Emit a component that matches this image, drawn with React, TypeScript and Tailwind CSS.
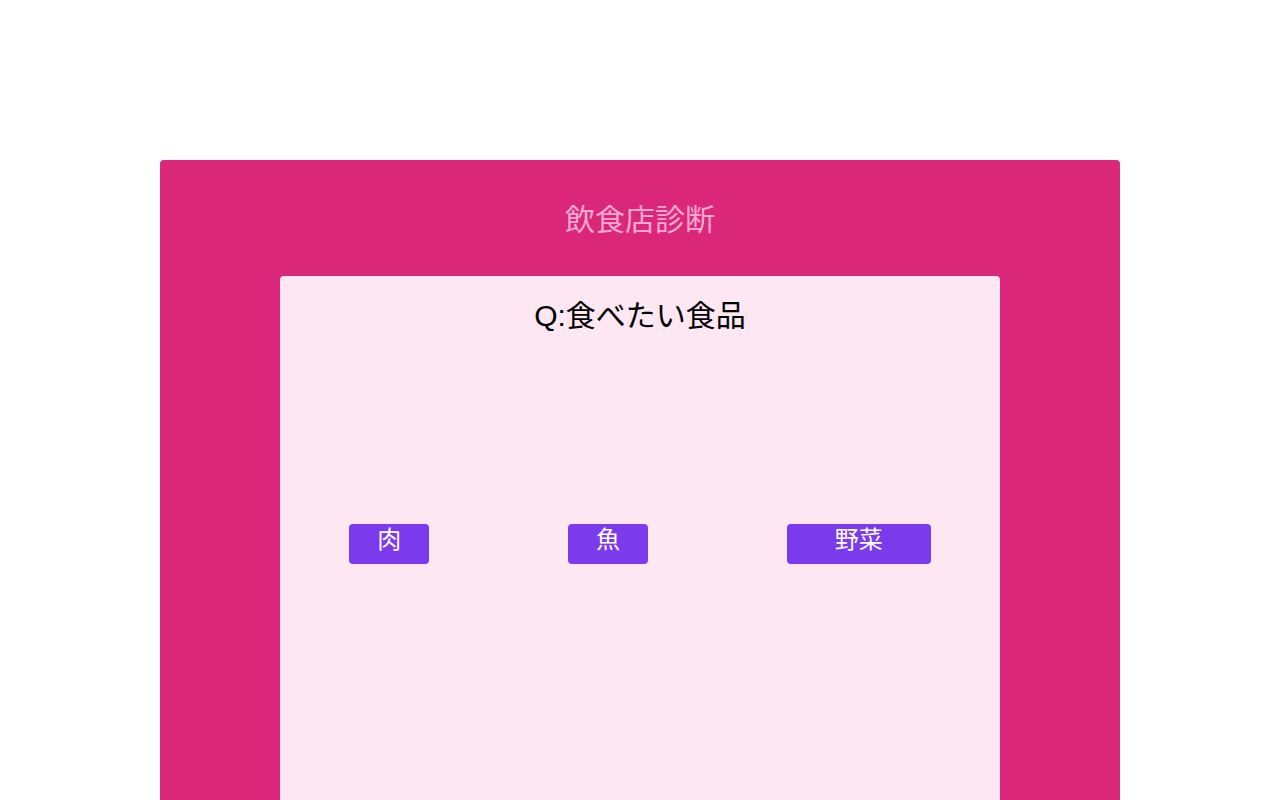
export default function App() {
  const choices = ["肉", "魚", "野菜"];
  return (
    <div className="min-h-screen bg-white pt-40 font-['Liberation_Sans','Noto_Sans_CJK_JP',sans-serif]">
      <div className="mx-auto w-[960px] rounded bg-[#db2777] pt-[42px] pb-10">
        <h1 className="text-center text-3xl text-[#f9a8d4]">飲食店診断</h1>
        <div className="mx-auto mt-[38px] min-h-[600px] w-[720px] rounded bg-[#fce7f3] pt-[22px]">
          <p className="text-center text-3xl text-black">Q:食べたい食品</p>
          <div className="mt-[190px] flex justify-around">
            {choices.map((c) => (
              <button
                key={c}
                className={`h-10 rounded bg-[#7c3aed] text-2xl text-white ${c === "野菜" ? "w-36" : "w-20"} flex items-start justify-center`}
              >
                {c}
              </button>
            ))}
          </div>
        </div>
      </div>
    </div>
  );
}
